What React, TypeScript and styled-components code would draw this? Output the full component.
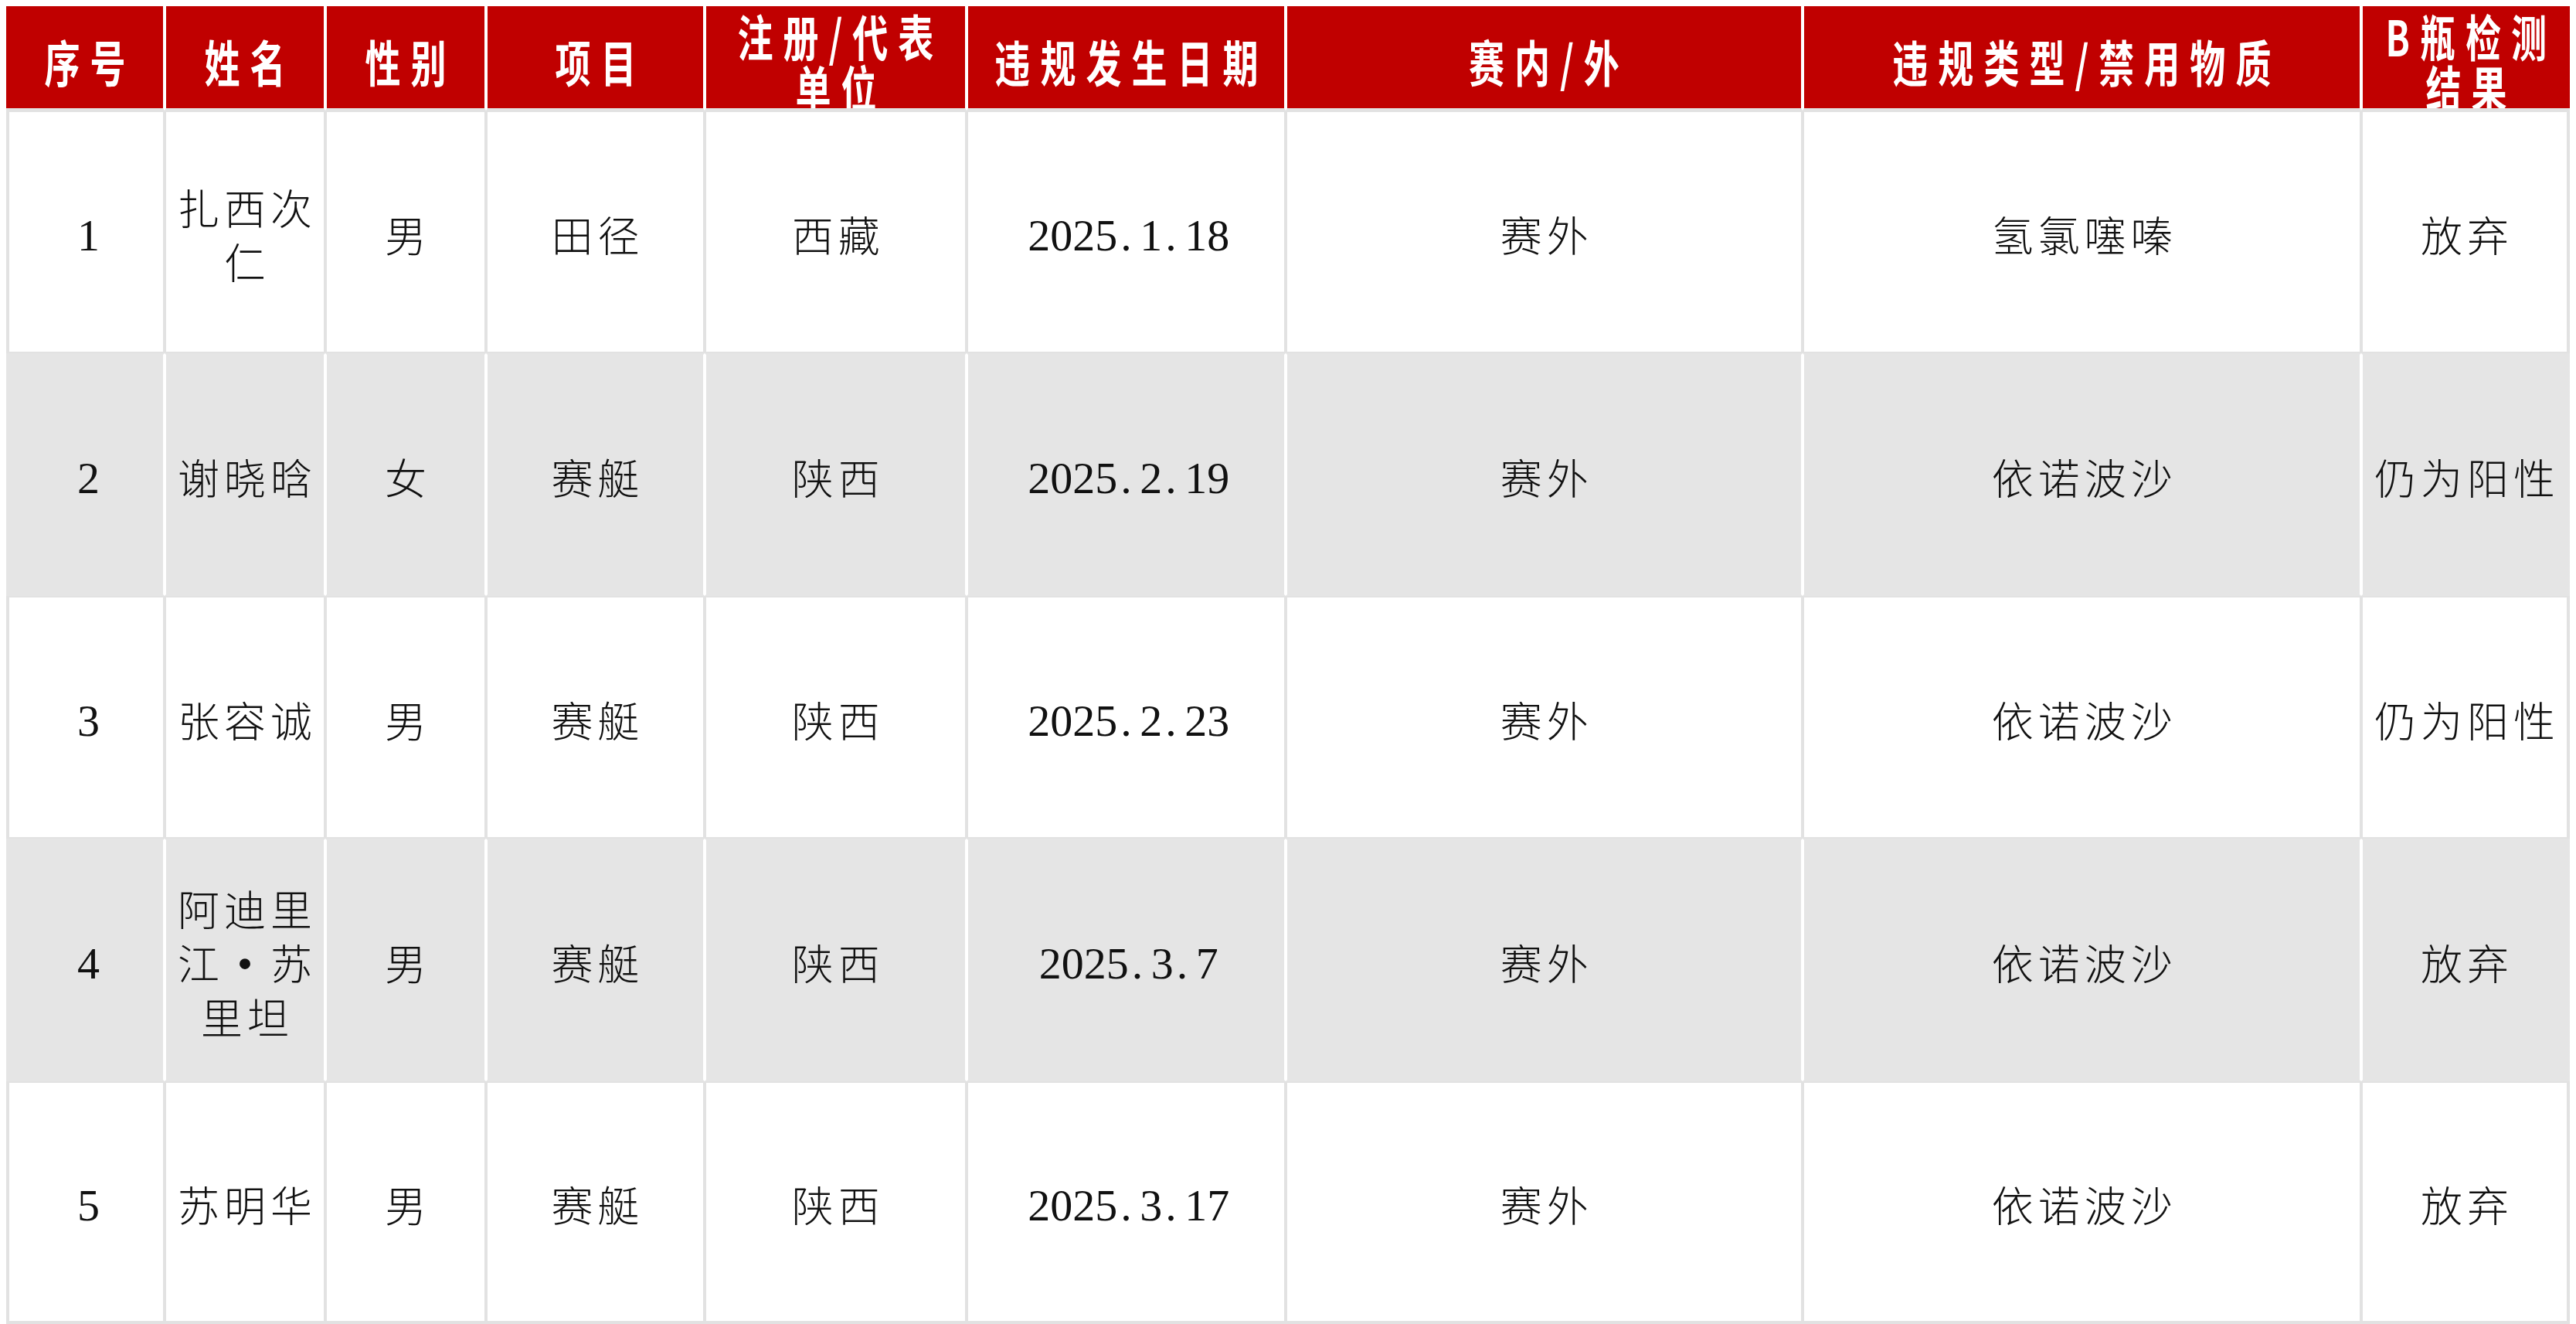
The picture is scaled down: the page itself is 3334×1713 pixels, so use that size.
import React from "react";
import styled, { createGlobalStyle } from "styled-components";

const GlobalStyle = createGlobalStyle`
  html, body {
    background: #ffffff;
  }
  body {
    margin: 8px;
    font-family: "Noto Sans CJK SC", sans-serif;
  }
  * {
    box-sizing: border-box;
  }
`;

type Column = {
  title: string[];
  width: number;
};

type Record = {
  no: string;
  name: string;
  gender: string;
  sport: string;
  unit: string;
  date: string;
  inOut: string;
  substance: string;
  bResult: string;
};

const columns: Column[] = [
  { title: ["序号"], width: 6.18 },
  { title: ["姓名"], width: 6.27 },
  { title: ["性别"], width: 6.27 },
  { title: ["项目"], width: 8.53 },
  { title: ["注册/代表", "单位"], width: 10.22 },
  { title: ["违规发生日期"], width: 12.45 },
  { title: ["赛内/外"], width: 20.16 },
  { title: ["违规类型/禁用物质"], width: 21.79 },
  { title: ["B瓶检测", "结果"], width: 8.13 },
];

const records: Record[] = [
  { no: "1", name: "扎西次仁", gender: "男", sport: "田径", unit: "西藏", date: "2025.1.18", inOut: "赛外", substance: "氢氯噻嗪", bResult: "放弃" },
  { no: "2", name: "谢晓晗", gender: "女", sport: "赛艇", unit: "陕西", date: "2025.2.19", inOut: "赛外", substance: "依诺波沙", bResult: "仍为阳性" },
  { no: "3", name: "张容诚", gender: "男", sport: "赛艇", unit: "陕西", date: "2025.2.23", inOut: "赛外", substance: "依诺波沙", bResult: "仍为阳性" },
  { no: "4", name: "阿迪里江·苏里坦", gender: "男", sport: "赛艇", unit: "陕西", date: "2025.3.7", inOut: "赛外", substance: "依诺波沙", bResult: "放弃" },
  { no: "5", name: "苏明华", gender: "男", sport: "赛艇", unit: "陕西", date: "2025.3.17", inOut: "赛外", substance: "依诺波沙", bResult: "放弃" },
];

const RED = "#c00000";
const LINE = "#e2e2e2";
const SHADE = "#e5e5e5";

function DateText({ value }: { value: string }) {
  const parts = value.split(".");
  return (
    <NumText>
      {parts.map((p, i) => (
        <React.Fragment key={i}>
          {i > 0 && <Period>.</Period>}
          {p}
        </React.Fragment>
      ))}
    </NumText>
  );
}

function NameText({ value }: { value: string }) {
  const parts = value.split("·");
  return (
    <>
      {parts.map((p, i) => (
        <React.Fragment key={i}>
          {i > 0 && <MidDot>·</MidDot>}
          {p}
        </React.Fragment>
      ))}
    </>
  );
}

export default function App() {
  return (
    <>
      <GlobalStyle />
      <Table>
        <colgroup>
          {columns.map((c, i) => (
            <col key={i} style={{ width: `${c.width}%` }} />
          ))}
        </colgroup>
        <thead>
          <HeadRow>
            {columns.map((c, i) => (
              <HeadCell key={i}>
                <HeadStack>
                  {c.title.map((line, j) => (
                    <HeadLine key={j}>{line}</HeadLine>
                  ))}
                </HeadStack>
              </HeadCell>
            ))}
          </HeadRow>
        </thead>
        <tbody>
          {records.map((r, i) => {
            const shaded = i % 2 === 1;
            return (
              <BodyRow key={r.no}>
                <BodyCell $shaded={shaded}>
                  <NumText>{r.no}</NumText>
                </BodyCell>
                <BodyCell $shaded={shaded}>
                  <NameText value={r.name} />
                </BodyCell>
                <BodyCell $shaded={shaded}>{r.gender}</BodyCell>
                <BodyCell $shaded={shaded}>{r.sport}</BodyCell>
                <BodyCell $shaded={shaded}>{r.unit}</BodyCell>
                <BodyCell $shaded={shaded}>
                  <DateText value={r.date} />
                </BodyCell>
                <BodyCell $shaded={shaded}>{r.inOut}</BodyCell>
                <BodyCell $shaded={shaded}>{r.substance}</BodyCell>
                <BodyCell $shaded={shaded}>{r.bResult}</BodyCell>
              </BodyRow>
            );
          })}
        </tbody>
      </Table>
    </>
  );
}

const Table = styled.table`
  width: 100%;
  table-layout: fixed;
  border-collapse: separate;
  border-spacing: 0;
`;

const HeadRow = styled.tr`
  height: 135px;
`;

const HeadCell = styled.th`
  height: 135px;
  padding: 0;
  background: ${RED};
  color: #ffffff;
  font-weight: 700;
  vertical-align: top;
  overflow: hidden;
  border-left: 2px solid #ffffff;
  border-right: 2px solid #ffffff;
  border-bottom: 3px solid ${LINE};
  &:first-child {
    border-left: 0;
  }
  &:last-child {
    border-right: 0;
  }
`;

const HeadStack = styled.div`
  display: flex;
  flex-direction: column;
  align-items: center;
  justify-content: center;
  width: 100%;
  height: 132px;
  margin-top: 4px;
  margin-bottom: -4px;
`;

const HeadLine = styled.span`
  display: block;
  flex-shrink: 0;
  white-space: nowrap;
  font-size: 64px;
  line-height: 66px;
  letter-spacing: 18px;
  padding-left: 18px;
  transform: scaleX(0.72);
`;

const BodyRow = styled.tr`
  height: 314px;
  &:last-child > td {
    border-bottom-width: 4px;
  }
`;

const BodyCell = styled.td<{ $shaded: boolean }>`
  padding: 6px 0 0 6px;
  text-align: center;
  vertical-align: middle;
  font-size: 54px;
  line-height: 70px;
  letter-spacing: 6px;
  font-weight: 300;
  color: #111111;
  background: ${({ $shaded }) => ($shaded ? SHADE : "#ffffff")};
  border: 2px solid ${({ $shaded }) => ($shaded ? SHADE : LINE)};
  border-left-color: ${({ $shaded }) => ($shaded ? "#ffffff" : LINE)};
  border-right-color: ${({ $shaded }) => ($shaded ? "#ffffff" : LINE)};
  &:first-child {
    border-left-width: 4px;
    border-left-color: ${({ $shaded }) => ($shaded ? SHADE : LINE)};
  }
  &:last-child {
    border-right-width: 4px;
    border-right-color: ${({ $shaded }) => ($shaded ? SHADE : LINE)};
  }
`;

const NumText = styled.span`
  font-family: "Liberation Serif", serif;
  font-size: 58px;
  letter-spacing: 0;
`;

const Period = styled.span`
  display: inline-block;
  width: 29px;
  padding-left: 4px;
  text-align: left;
`;

const MidDot = styled.span`
  display: inline-block;
  width: 54px;
  margin-right: 6px;
  text-align: center;
  font-weight: 700;
  letter-spacing: 0;
`;
